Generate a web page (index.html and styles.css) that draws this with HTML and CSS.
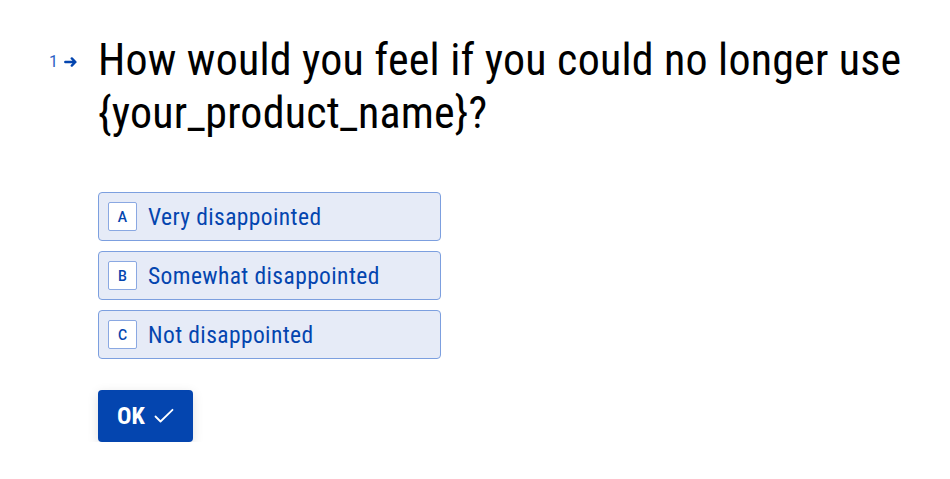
FILE: index.html
```html
<!DOCTYPE html>
<html>
<head>
<meta charset="utf-8">
<link rel="stylesheet" href="styles.css">
</head>
<body>
<main class="question">
  <div class="counter">
    <span class="num">1</span>
    <svg class="arrow" width="14" height="10" viewBox="0 0 14 10" aria-hidden="true"><path d="M1.3 5h10M7.8 1.4L11.4 5 7.8 8.6" fill="none" stroke="currentColor" stroke-width="2.4" stroke-linecap="round" stroke-linejoin="round"/></svg>
  </div>
  <div class="content">
    <h1 class="title">How would you feel if you could no longer use {your_product_name}?</h1>
    <div class="choices">
      <div class="choice"><span class="key">A</span><span class="label">Very disappointed</span></div>
      <div class="choice"><span class="key">B</span><span class="label">Somewhat disappointed</span></div>
      <div class="choice"><span class="key">C</span><span class="label">Not disappointed</span></div>
    </div>
    <button class="ok">OK <svg class="check" width="20" height="16" viewBox="0 0 20 16" aria-hidden="true"><path d="M1.5 8.5l5 5L18.5 1.8" fill="none" stroke="currentColor" stroke-width="1.8" stroke-linecap="round" stroke-linejoin="round"/></svg></button>
  </div>
</main>
</body>
</html>
```
FILE: styles.css
```css
html, body {
  margin: 0;
  background: #fff;
}
body {
  font-family: "Roboto Condensed", Roboto, sans-serif;
  font-stretch: condensed;
}
.question {
  display: flex;
  padding: 34px 0 0 49px;
}
.counter {
  display: flex;
  align-items: center;
  gap: 6px;
  width: 49px;
  height: 16px;
  padding-top: 20px;
  color: #0445af;
}
.num {
  font-family: Roboto, sans-serif;
  font-stretch: normal;
  font-size: 16px;
  line-height: 16px;
  color: #2a5fc4;
}
.arrow {
  display: block;
}
.content {
  display: flex;
  flex-direction: column;
  align-items: flex-start;
}
.title {
  margin: 0;
  font-weight: 400;
  font-size: 44px;
  line-height: 53px;
  letter-spacing: 0.2px;
  color: #000;
  width: 840px;
}
.choices {
  margin-top: 52px;
  display: flex;
  flex-direction: column;
  gap: 10px;
}
.choice {
  box-sizing: border-box;
  width: 343px;
  height: 49px;
  display: flex;
  align-items: center;
  gap: 11px;
  padding-left: 9px;
  background: #e6ebf7;
  border: 1px solid #7c9fdf;
  border-radius: 4px;
  color: #0445af;
}
.key {
  box-sizing: border-box;
  width: 29px;
  height: 29px;
  display: flex;
  align-items: center;
  justify-content: center;
  background: #fff;
  border: 1px solid #8aa8e2;
  border-radius: 2px;
  font-family: Roboto, sans-serif;
  font-stretch: normal;
  font-weight: 500;
  font-size: 14px;
}
.label {
  font-size: 23.5px;
  line-height: 28px;
  letter-spacing: 0.4px;
}
.ok {
  margin-top: 31px;
  box-sizing: border-box;
  width: 95px;
  height: 52px;
  display: flex;
  align-items: center;
  gap: 9px;
  padding: 0 0 0 19px;
  background: #0445af;
  color: #fff;
  border: none;
  border-radius: 4px;
  box-shadow: 0 3px 12px rgba(0, 0, 0, 0.12);
  font-family: "Roboto Condensed", Roboto, sans-serif;
  font-stretch: condensed;
  font-weight: 700;
  font-size: 24px;
}
.check {
  display: block;
}
```
